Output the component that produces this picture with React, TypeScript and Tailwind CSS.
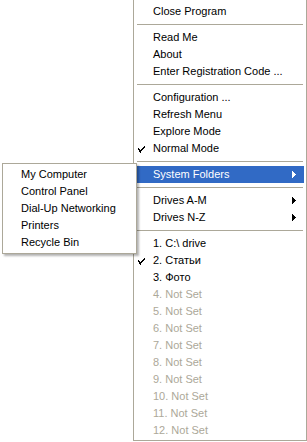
import React from "react";

type Entry =
  | { kind: "sep" }
  | { kind: "item"; label: string; checked?: boolean; disabled?: boolean; submenu?: boolean; active?: boolean };

const mainMenu: Entry[] = [
  { kind: "item", label: "Close Program" },
  { kind: "sep" },
  { kind: "item", label: "Read Me" },
  { kind: "item", label: "About" },
  { kind: "item", label: "Enter Registration Code ..." },
  { kind: "sep" },
  { kind: "item", label: "Configuration ..." },
  { kind: "item", label: "Refresh Menu" },
  { kind: "item", label: "Explore Mode" },
  { kind: "item", label: "Normal Mode", checked: true },
  { kind: "sep" },
  { kind: "item", label: "System Folders", submenu: true, active: true },
  { kind: "sep" },
  { kind: "item", label: "Drives A-M", submenu: true },
  { kind: "item", label: "Drives N-Z", submenu: true },
  { kind: "sep" },
  { kind: "item", label: "1. C:\\ drive" },
  { kind: "item", label: "2. Статьи", checked: true },
  { kind: "item", label: "3. Фото" },
  ...Array.from({ length: 9 }, (_, i) => ({
    kind: "item" as const,
    label: `${i + 4}. Not Set`,
    disabled: true,
  })),
];

const systemFolders = ["My Computer", "Control Panel", "Dial-Up Networking", "Printers", "Recycle Bin"];

function Check() {
  return (
    <svg width="7" height="7" viewBox="0 0 7 7" className="absolute left-[2px] top-[6px]" shapeRendering="crispEdges">
      <path d="M6 0h1v1H6zM5 1h2v1H5zM4 2h2v1H4zM0 2h1v1H0zM0 3h2v1H0zM3 3h2v1H3zM1 4h3v1H1zM1 5h2v1H1zM2 6h1v1H2z" fill="#000" />
    </svg>
  );
}

function Arrow({ white }: { white?: boolean }) {
  return (
    <svg width="4" height="7" viewBox="0 0 4 7" className="absolute right-[8px] top-[5px]" shapeRendering="crispEdges">
      <path d="M0 0h1v7H0zM1 1h1v5H1zM2 2h1v3H2zM3 3h1v1H3z" fill={white ? "#fff" : "#000"} />
    </svg>
  );
}

function Item({ e }: { e: Extract<Entry, { kind: "item" }> }) {
  return (
    <div
      className={`relative h-[17px] pl-[17px] leading-[17px] whitespace-nowrap ${
        e.active ? "bg-[#316ac5] text-white" : e.disabled ? "text-[#aca899]" : "text-black"
      }`}
    >
      {e.checked && <Check />}
      {e.label}
      {e.submenu && <Arrow white={e.active} />}
    </div>
  );
}

export default function App() {
  return (
    <div
      className="relative w-[307px] h-[442px] bg-white text-[11px] overflow-hidden"
      style={{ fontFamily: '"Liberation Sans", Arial, sans-serif' }}
    >
      <div className="ml-[133px] w-[174px] h-[441px] border-x border-b border-[#aca899] bg-white px-[2px] pt-[3px]">
        {mainMenu.map((e, i) =>
          e.kind === "sep" ? (
            <div key={i} className="h-[9px] flex items-center px-[1px]">
              <div className="h-px w-full bg-[#aca899]" />
            </div>
          ) : (
            <Item key={i} e={e} />
          )
        )}
      </div>

      {/* System Folders submenu */}
      <div className="absolute left-[2px] top-[163px] w-[135px] h-[91px] border border-[#aca899] bg-white px-[2px] pt-[2px] shadow-[2px_2px_2px_rgba(0,0,0,0.3)]">
        {systemFolders.map((label) => (
          <div key={label} className="h-[17px] pl-[16px] leading-[17px] text-black whitespace-nowrap">
            {label}
          </div>
        ))}
      </div>
    </div>
  );
}
